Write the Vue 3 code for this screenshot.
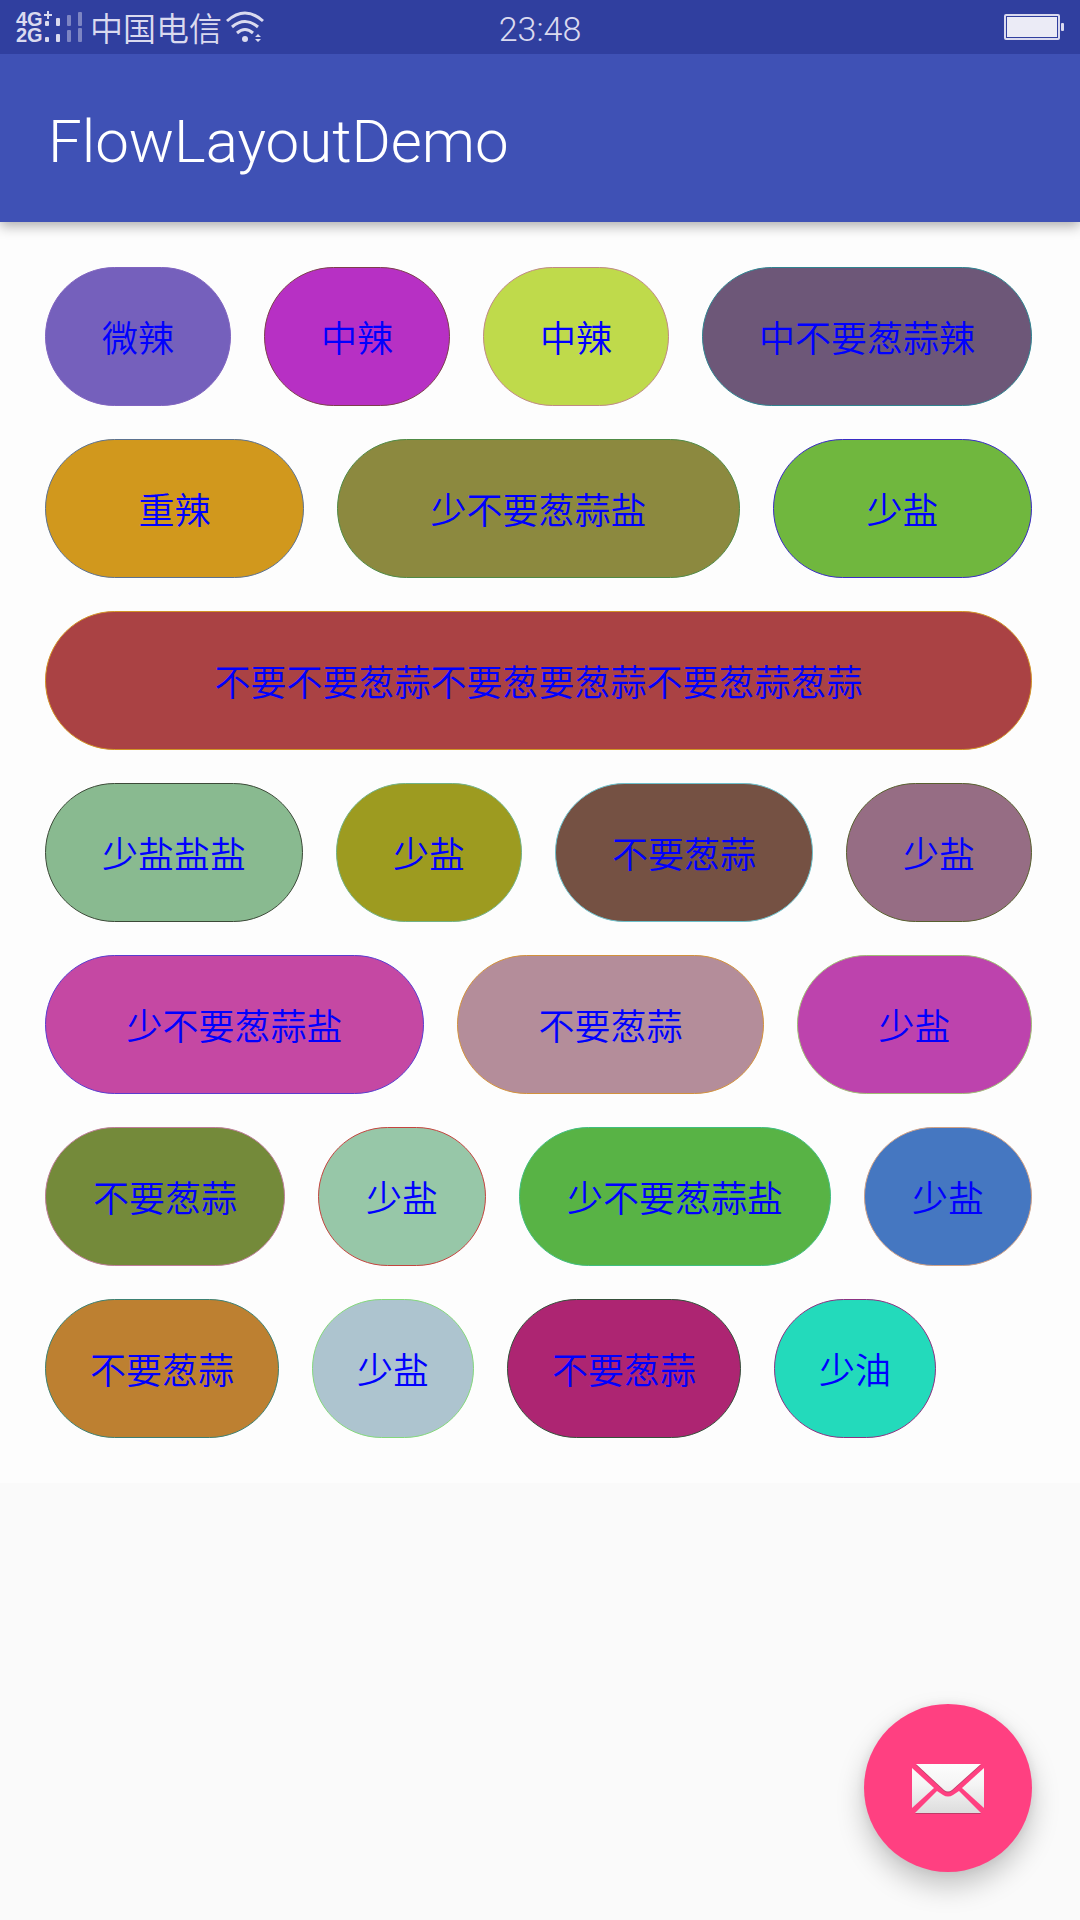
<script setup>
const tags = [
  { text: '微辣', fill: '#7560bc', line: '#8064c0' },
  { text: '中辣', fill: '#b730c4', line: '#7d3f4c' },
  { text: '中辣', fill: '#bfda4b', line: '#c08a84' },
  { text: '中不要葱蒜辣', fill: '#6d5778', line: '#2f8390' },
  { text: '重辣', fill: '#d1981d', line: '#5c7290' },
  { text: '少不要葱蒜盐', fill: '#8c893f', line: '#4f8a45' },
  { text: '少盐', fill: '#70b73e', line: '#3a2cc4' },
  { text: '不要不要葱蒜不要葱要葱蒜不要葱蒜葱蒜', fill: '#aa4244', line: '#d19226' },
  { text: '少盐盐盐', fill: '#89ba90', line: '#3c4a38' },
  { text: '少盐', fill: '#9d9b20', line: '#72b285' },
  { text: '不要葱蒜', fill: '#755143', line: '#6cc0cb' },
  { text: '少盐', fill: '#966d84', line: '#58602f' },
  { text: '少不要葱蒜盐', fill: '#c548a3', line: '#5a3cd0' },
  { text: '不要葱蒜', fill: '#b48d9a', line: '#d3923c' },
  { text: '少盐', fill: '#bd43ad', line: '#a0bd74' },
  { text: '不要葱蒜', fill: '#748a3a', line: '#bd7c97' },
  { text: '少盐', fill: '#97c7a8', line: '#c4453f' },
  { text: '少不要葱蒜盐', fill: '#58b345', line: '#40be80' },
  { text: '少盐', fill: '#4577c1', line: '#cfa085' },
  { text: '不要葱蒜', fill: '#bd8031', line: '#3d8072' },
  { text: '少盐', fill: '#adc4cf', line: '#84d87c' },
  { text: '不要葱蒜', fill: '#ad2572', line: '#35503a' },
  { text: '少油', fill: '#23dabb', line: '#8c3282' },
]
</script>

<template>
  <div class="screen">
    <header class="top">
      <div class="status">
        <div class="network">
          <div class="modes"><span>4G</span><span>2G</span></div>
          <svg class="bars" width="40" height="32" viewBox="0 0 40 32" fill="#dadaef" aria-hidden="true">
            <path d="M3 0h2v3h3v2H5v3H3V5H0V3h3z" />
            <rect x="1" y="10" width="4" height="5" rx="1" />
            <rect x="12" y="7" width="4" height="8" rx="1" />
            <rect x="1" y="26" width="4" height="5" rx="1" />
            <rect x="12" y="23" width="4" height="8" rx="1" />
            <g opacity="0.45">
              <rect x="23" y="4" width="4" height="11" rx="1" />
              <rect x="34" y="1" width="4" height="14" rx="1" />
              <rect x="23" y="19" width="4" height="12" rx="1" />
              <rect x="34" y="17" width="4" height="14" rx="1" />
            </g>
          </svg>
          <span class="carrier">中国电信</span>
          <svg class="wifi" width="40" height="32" viewBox="0 0 40 32" fill="none" stroke="#dadaef" stroke-width="3" aria-hidden="true">
            <path d="M1 10Q19 -6 37 10M6 16Q19 5 32 16M11 22Q19 15 27 22" />
            <circle cx="19" cy="28" r="3" fill="#dadaef" stroke="none" />
            <path d="M29 26l3-3 3 3zM29 28h6l-3 3z" fill="#dadaef" stroke="none" />
          </svg>
        </div>
        <time class="clock">23:48</time>
        <div class="power">
          <svg width="60" height="26" viewBox="0 0 60 26" aria-hidden="true">
            <rect x="1" y="1" width="54" height="24" rx="1" fill="none" stroke="#dadaef" stroke-width="2" />
            <rect x="3" y="3" width="50" height="20" fill="#ebebf6" />
            <rect x="57" y="9" width="3" height="8" rx="1" fill="#dadaef" />
          </svg>
        </div>
      </div>
      <div class="toolbar"><h1>FlowLayoutDemo</h1></div>
    </header>

    <main class="flow">
      <button
        v-for="(tag, i) in tags"
        :key="i"
        type="button"
        class="tag"
        :style="{ backgroundColor: tag.fill, borderColor: tag.line }"
      >{{ tag.text }}</button>
    </main>

    <button type="button" class="fab" aria-label="Email">
      <svg width="72" height="72" viewBox="0 0 72 72" aria-hidden="true">
        <defs>
          <linearGradient id="paper" gradientUnits="userSpaceOnUse" x1="0" y1="11" x2="0" y2="61">
            <stop offset="0" stop-color="#fdfdfd" />
            <stop offset="0.4" stop-color="#f5f5f5" />
            <stop offset="1" stop-color="#dcdcdc" />
          </linearGradient>
        </defs>
        <g fill="#8a3a55" opacity="0.55" transform="translate(0 2)">
          <path d="M4 11H69L40 37Q36 40 32 37Z" />
          <path d="M3 60L25 38L31 42Q36 45 41 42L47 38L69 60Z" />
        </g>
        <g fill="url(#paper)" transform="translate(0 1)">
          <path d="M4 11H69L40 37Q36 40 32 37Z" />
          <path d="M0 15L22 35L0 55Z" />
          <path d="M72 15L50 35L72 55Z" />
          <path d="M3 60L25 38L31 42Q36 45 41 42L47 38L69 60Z" />
        </g>
      </svg>
    </button>
  </div>
</template>

<style>
body {
  margin: 0;
  background: #fafafa;
}
</style>

<style scoped>
.screen {
  min-height: 100vh;
  background: #fafafa;
  font-family: Roboto, "Noto Sans CJK SC", sans-serif;
}
.top {
  position: relative;
  color: #fff;
  background: #3f51b5;
  box-shadow: 0 4px 12px rgba(0, 0, 0, 0.32);
}
.status {
  display: grid;
  grid-template-columns: 1fr auto 1fr;
  align-items: center;
  height: 54px;
  padding: 0 16px;
  background: #303f9f;
  color: #dadaef;
}
.network {
  display: flex;
  align-items: center;
}
.modes {
  display: flex;
  flex-direction: column;
  width: 28px;
  font: bold 20px/16px "Liberation Sans", sans-serif;
}
.carrier {
  margin: 0 4px 0 6px;
  font: 350 33px/48px "Noto Sans CJK SC", sans-serif;
}
.clock {
  padding-top: 4px;
  font-size: 34px;
  font-weight: 300;
  line-height: 40px;
}
.power {
  display: flex;
  justify-content: flex-end;
}
.toolbar {
  display: flex;
  align-items: center;
  height: 168px;
  padding: 8px 48px 0;
  box-sizing: border-box;
}
h1 {
  margin: 0;
  font-size: 60px;
  font-weight: 300;
  line-height: 72px;
}
.flow {
  display: flex;
  flex-wrap: wrap;
  gap: 33px;
  padding: 45px 48px 45px 45px;
  background: #fdfdfd;
}
/* Takes the spare room of the last line, so its tags keep their own width. */
.flow::after {
  content: "";
  flex: 9999 0 0;
}
.tag {
  flex: 1 0 auto;
  padding: 42px 44px;
  border: 1px solid;
  border-radius: 70px;
  color: #00f;
  font: 350 36px/53px "Noto Sans CJK SC", sans-serif;
}
.fab {
  position: fixed;
  right: 48px;
  bottom: 48px;
  display: flex;
  align-items: center;
  justify-content: center;
  width: 168px;
  height: 168px;
  padding: 0;
  border: 0;
  border-radius: 50%;
  background: #ff4081;
  box-shadow: 0 14px 28px rgba(0, 0, 0, 0.22), 0 0 12px rgba(0, 0, 0, 0.08);
}
</style>
